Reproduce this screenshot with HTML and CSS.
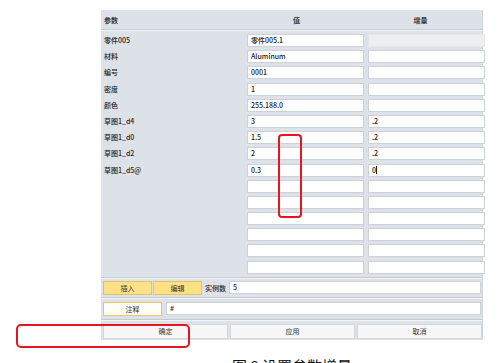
FILE: index.html
```html
<!DOCTYPE html>
<html lang="zh-CN">
<head>
    <meta charset="UTF-8">
    <meta name="viewport" content="width=device-width, initial-scale=1.0">
    <title>设置参数增量</title>
    <link rel="stylesheet" href="styles.css">
</head>
<body>
    <div class="page">
        <div class="panel">
            <div class="head">
                <div class="head-name">参数</div>
                <div class="head-val">值</div>
                <div class="head-inc">增量</div>
            </div>

            <div class="params">
                <div class="name">零件005</div>
                <div class="cell">零件005.1</div>
                <div class="cell off"></div>

                <div class="name">材料</div>
                <div class="cell">Aluminum</div>
                <div class="cell"></div>

                <div class="name">编号</div>
                <div class="cell">0001</div>
                <div class="cell"></div>

                <div class="name">密度</div>
                <div class="cell">1</div>
                <div class="cell"></div>

                <div class="name">颜色</div>
                <div class="cell">255.188.0</div>
                <div class="cell"></div>

                <div class="name">草图1_d4</div>
                <div class="cell">3</div>
                <div class="cell">.2</div>

                <div class="name">草图1_d0</div>
                <div class="cell">1.5</div>
                <div class="cell">.2</div>

                <div class="name">草图1_d2</div>
                <div class="cell">2</div>
                <div class="cell">.2</div>

                <div class="name">草图1_d5@</div>
                <div class="cell">0.3</div>
                <div class="cell">0<span class="caret"></span></div>

                <div class="name"></div><div class="cell"></div><div class="cell"></div>
                <div class="name"></div><div class="cell"></div><div class="cell"></div>
                <div class="name"></div><div class="cell"></div><div class="cell"></div>
                <div class="name"></div><div class="cell"></div><div class="cell"></div>
                <div class="name"></div><div class="cell"></div><div class="cell"></div>
                <div class="name"></div><div class="cell"></div><div class="cell"></div>
            </div>

            <div class="bar">
                <button class="btn-yellow">插入</button>
                <button class="btn-yellow">编辑</button>
                <span class="count-label">实例数</span>
                <div class="cell wide">5</div>
            </div>

            <div class="bar note-bar">
                <button class="btn-note">注释</button>
                <div class="cell wide">#</div>
            </div>

            <div class="actions">
                <button class="btn-act">确定</button>
                <button class="btn-act">应用</button>
                <button class="btn-act">取消</button>
            </div>

            <!-- 红色标注框 -->
            <div class="mark mark-col"></div>
        </div>
        <div class="mark mark-ok"></div>

        <div class="caption">图 8 设置参数增量</div>
    </div>
</body>
</html>
```

FILE: styles.css
```css
body {
    margin: 0;
    padding: 0;
    background-color: #fff;
    font-family: "Noto Sans CJK SC", "Noto Sans", sans-serif;
    color: #2b2b2b;
}

.page {
    position: relative;
    width: 498px;
    height: 363px;
    overflow: hidden;
    padding-top: 10px;
    box-sizing: border-box;
}

.panel {
    position: relative;
    margin-left: 101px;
    width: 382px;
    background-color: #dde1e8;
    border-right: 1px solid #cfd3da;
    box-sizing: border-box;
    padding-bottom: 1px;
}

.head {
    display: grid;
    grid-template-columns: 142px 117px 117px;
    column-gap: 4px;
    height: 19px;
    align-items: center;
    font-size: 7px;
    font-weight: bold;
    color: #3a3a3a;
    border-bottom: 1px solid #c6cad1;
    box-shadow: 0 1px 0 #f3f4f6;
}

.head-name {
    padding-left: 3px;
}

.head-val {
    text-align: center;
    padding-right: 18px;
}

.head-inc {
    text-align: center;
    padding-right: 12px;
}

.params {
    display: grid;
    grid-template-columns: 142px 117px 117px;
    grid-auto-rows: 13px;
    column-gap: 4px;
    row-gap: 3.2px;
    padding-top: 4px;
    padding-bottom: 3px;
    border-bottom: 1px solid #c6cad1;
    box-shadow: 0 1px 0 #f3f4f6;
}

.name {
    font-size: 7px;
    font-weight: 500;
    padding-left: 3px;
    line-height: 13px;
    color: #1e1e1e;
}

.cell {
    background-color: #fff;
    border: 1px solid #cdd1d8;
    box-sizing: border-box;
    font-size: 7px;
    font-weight: 500;
    line-height: 11px;
    padding-left: 3px;
    color: #1a1a1a;
}

.cell.off {
    background-color: #eeeeee;
    border-color: #e4e6ea;
}

.caret {
    display: inline-block;
    width: 1px;
    height: 8px;
    background-color: #222;
    vertical-align: -1px;
}

.bar {
    display: flex;
    align-items: center;
    padding: 3px 1px 2px 2px;
    gap: 1px;
    border-bottom: 1px solid #c6cad1;
    box-shadow: 0 1px 0 #f3f4f6;
}

.bar .wide {
    flex: 1;
    height: 13px;
}

button {
    font-family: "Noto Sans CJK SC", "Noto Sans", sans-serif;
    font-size: 7px;
    color: #333;
    padding: 0;
    margin: 0;
    cursor: pointer;
}

.btn-yellow {
    width: 49px;
    height: 14px;
    background-color: #fde184;
    border: 1px solid #e2c463;
}

.count-label {
    font-size: 7px;
    font-weight: 500;
    color: #1e1e1e;
    margin: 0 2px 0 2px;
}

.note-bar {
    padding-top: 4px;
    padding-bottom: 3px;
    gap: 4px;
}

.btn-note {
    width: 59px;
    height: 14px;
    background-color: #fffdf5;
    border: 1px solid #e6c865;
}

.actions {
    display: flex;
    gap: 2px;
    padding: 4px 0 0 2px;
}

.btn-act {
    width: 125px;
    height: 15px;
    background-color: #f7f7f7;
    border: 1px solid #d3d6db;
}

.mark {
    position: absolute;
    border: 2px solid #e8141e;
    box-sizing: border-box;
}

.mark-col {
    left: 177px;
    top: 124px;
    width: 24px;
    height: 84px;
    border-radius: 4px;
}

.mark-ok {
    left: 16px;
    top: 324px;
    width: 174px;
    height: 24px;
    border-radius: 5px;
}

.caption {
    margin-top: 17px;
    margin-left: 101px;
    width: 382px;
    text-align: center;
    font-size: 15px;
    line-height: 18px;
    color: #111;
}
```
